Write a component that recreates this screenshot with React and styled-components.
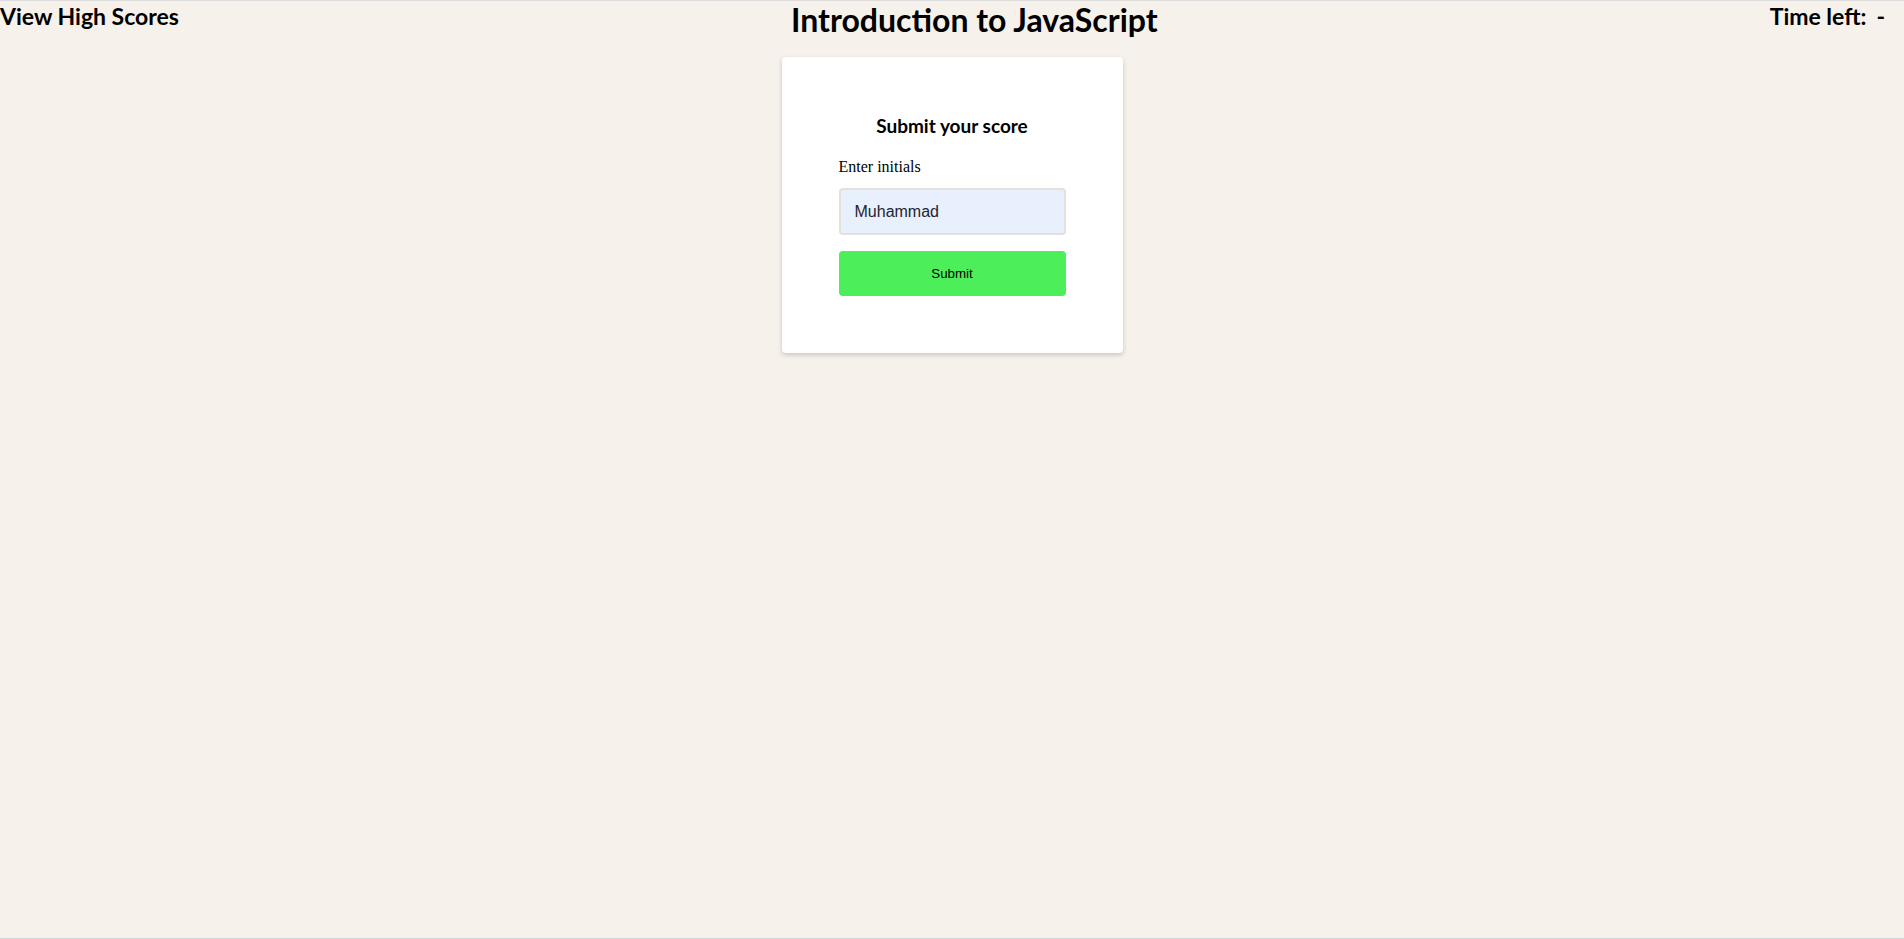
import React from "react";
import styled, { createGlobalStyle } from "styled-components";

const GlobalStyle = createGlobalStyle`
  html, body {
    margin: 0;
    padding: 0;
    background: #f6f1ea;
  }
  body {
    min-height: 939px;
    font-family: "Liberation Serif", "Times New Roman", serif;
    border-top: 1px solid #dcdcdc;
    border-bottom: 1px solid #cdd8dd;
    box-sizing: border-box;
  }
`;

const Page = styled.div`
  display: flex;
  flex-direction: column;
  align-items: center;
`;

const Header = styled.header`
  width: 100%;
  box-sizing: border-box;
  display: flex;
  justify-content: space-between;
  align-items: flex-start;
  padding: 0 19px 0 0;
  font-family: Lato, "Open Sans", sans-serif;
  font-weight: 700;
  color: #000;
`;

const NavText = styled.div`
  font-size: 23px;
  line-height: 30px;
`;

const Title = styled.h1`
  margin: 0;
  font-size: 32px;
  line-height: 38px;
  font-weight: 700;
`;

const Dash = styled.span`
  margin-left: 10px;
`;

const Card = styled.section`
  margin-top: 18px;
  background: #fff;
  border-radius: 4px;
  box-shadow: 0 2px 5px rgba(0, 0, 0, 0.18);
  padding: 57px;
  display: flex;
  flex-direction: column;
  width: 227px;
`;

const CardTitle = styled.h2`
  margin: 0 0 20px;
  text-align: center;
  font-family: Lato, "Open Sans", sans-serif;
  font-size: 19px;
  line-height: 24px;
  font-weight: 700;
  color: #000;
`;

const Label = styled.label`
  font-size: 16px;
  line-height: 18px;
  color: #000;
  margin-bottom: 12px;
`;

const Input = styled.input`
  box-sizing: border-box;
  width: 100%;
  height: 47px;
  border: 2px solid #e4e0da;
  border-radius: 4px;
  background: #e8f0fe;
  padding: 0 14px;
  font-family: "Liberation Sans", Arial, sans-serif;
  font-size: 16px;
  color: #1e2430;
  outline: none;
`;

const Button = styled.button`
  margin-top: 16px;
  height: 45px;
  width: 100%;
  border: none;
  border-radius: 4px;
  background: #4cef5a;
  font-family: "Liberation Sans", Arial, sans-serif;
  font-size: 13.33px;
  color: #000;
  cursor: pointer;
`;

export default function App() {
  return (
    <>
      <GlobalStyle />
      <Page>
        <Header>
          <NavText>View High Scores</NavText>
          <Title>Introduction to JavaScript</Title>
          <NavText>
            Time left:<Dash>-</Dash>
          </NavText>
        </Header>
        <Card>
          <CardTitle>Submit your score</CardTitle>
          <Label htmlFor="initials">Enter initials</Label>
          <Input id="initials" defaultValue="Muhammad" />
          <Button type="button">Submit</Button>
        </Card>
      </Page>
    </>
  );
}
